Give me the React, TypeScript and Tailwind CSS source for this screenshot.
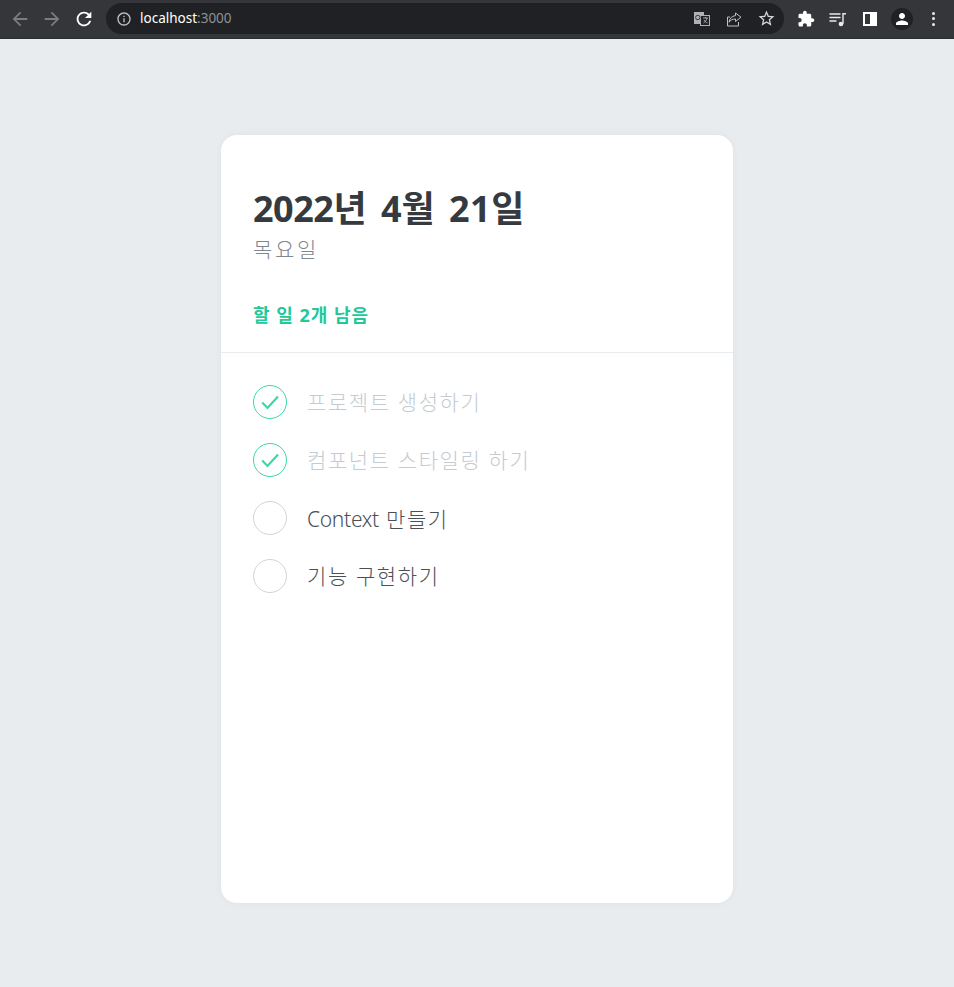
import React from "react";

const FONT = "font-['Noto_Sans','Noto_Sans_CJK_KR',sans-serif]";

interface IconProps {
  d: string;
  className: string;
}

const Icon: React.FC<IconProps> = ({ d, className }) => (
  <svg viewBox="0 0 24 24" fill="currentColor" className={className}>
    <path d={d} />
  </svg>
);

const ARROW_LEFT = "M20 11H7.83l5.59-5.59L12 4l-8 8 8 8 1.41-1.41L7.83 13H20v-2z";
const ARROW_RIGHT = "M4 11h12.17l-5.59-5.59L12 4l8 8-8 8-1.41-1.41L16.17 13H4v-2z";
const REFRESH =
  "M17.65 6.35C16.2 4.9 14.21 4 12 4c-4.42 0-7.99 3.58-7.99 8s3.57 8 7.99 8c3.73 0 6.84-2.55 7.73-6h-2.08c-.82 2.33-3.04 4-5.65 4-3.31 0-6-2.69-6-6s2.69-6 6-6c1.66 0 3.14.69 4.22 1.78L13 11h7V4l-2.35 2.35z";
const INFO =
  "M11 7h2v2h-2zm0 4h2v6h-2zm1-9C6.48 2 2 6.48 2 12s4.48 10 10 10 10-4.48 10-10S17.52 2 12 2zm0 18c-4.41 0-8-3.59-8-8s3.59-8 8-8 8 3.59 8 8-3.59 8-8 8z";
const STAR =
  "M22 9.24l-7.19-.62L12 2 9.19 8.63 2 9.24l5.46 4.73L5.82 21 12 17.27 18.18 21l-1.63-7.03L22 9.24zM12 15.4l-3.76 2.27 1-4.28-3.32-2.88 4.38-.38L12 6.1l1.71 4.04 4.38.38-3.32 2.88 1 4.28L12 15.4z";
const PUZZLE =
  "M20.5 11H19V7c0-1.1-.9-2-2-2h-4V3.5C13 2.12 11.88 1 10.5 1S8 2.12 8 3.5V5H4c-1.1 0-1.99.9-1.99 2v3.8H3.5c1.49 0 2.7 1.21 2.7 2.7s-1.21 2.7-2.7 2.7H2V20c0 1.1.9 2 2 2h3.8v-1.5c0-1.49 1.21-2.7 2.7-2.7 1.49 0 2.7 1.21 2.7 2.7V22H17c1.1 0 2-.9 2-2v-4h1.5c1.38 0 2.5-1.12 2.5-2.5S21.88 11 20.5 11z";
const PERSON =
  "M12 12c2.21 0 4-1.79 4-4s-1.79-4-4-4-4 1.79-4 4 1.79 4 4 4zm0 2c-2.67 0-8 1.34-8 4v2h16v-2c0-2.66-5.33-4-8-4z";

const BrowserBar: React.FC = () => (
  <div className="flex h-[39px] items-start bg-[#35363a] pt-[3px] shadow-[inset_0_-1px_0_#2b2c30]">
    <div className="flex h-[31px] items-center pl-[9px]">
      <Icon d={ARROW_LEFT} className="h-[22px] w-[22px] text-[#7b7c7f]" />
      <Icon d={ARROW_RIGHT} className="ml-[10px] h-[22px] w-[22px] text-[#7b7c7f]" />
      <Icon d={REFRESH} className="ml-[10px] h-[22px] w-[22px] text-white" />
    </div>
    <div className="ml-[11px] flex h-[31px] w-[678px] items-center rounded-full bg-[#202124] pl-[10px] pr-[8px]">
      <Icon d={INFO} className="h-[16px] w-[16px] text-[#bdc1c6]" />
      <span className="ml-[8px] font-['Noto_Sans',sans-serif] text-[13.5px] leading-none text-white">
        localhost<span className="text-[#8f9296]">:3000</span>
      </span>
      <div className="ml-auto flex items-center gap-[14px]">
        <svg viewBox="0 0 18 18" className="h-[18px] w-[18px]">
          <rect x="1" y="2" width="10" height="12" fill="#aeb1b5" />
          <rect x="7.500" y="5.500" width="9" height="10" fill="#202124" stroke="#aeb1b5" strokeWidth="1" />
          <path d="M10 8h5M12.500 7v1M14 8c-.5 2.500-2 4-3.500 5M11 10c.8 1.400 2 2.500 3.500 3" fill="none" stroke="#aeb1b5" strokeWidth="0.900" />
          <circle cx="4.800" cy="7.500" r="2.200" fill="none" stroke="#35363a" strokeWidth="1" />
        </svg>
        <svg viewBox="0 0 18 18" className="h-[18px] w-[18px]" fill="none" stroke="#bdc1c6" strokeWidth="1">
          <path d="M10.500 3 16 7.200l-5.500 4.300V9c-3 0-5 1-6.500 3.200C4.500 8.500 7 6 10.500 5.600z" />
          <path d="M13.500 12v4h-11V7H5" />
        </svg>
        <Icon d={STAR} className="h-[19px] w-[19px] text-[#d5d7da]" />
      </div>
    </div>
    <div className="flex h-[31px] items-center">
      <Icon d={PUZZLE} className="ml-[13px] h-[18px] w-[18px] text-white" />
      <svg viewBox="0 0 18 18" className="ml-[14px] h-[18px] w-[18px]" fill="none" stroke="#e8eaed" strokeWidth="1.400">
        <path d="M0.500 4h11M0.500 7.500h11M0.500 11h7" />
        <path d="M17 3.800h-3v10" />
        <circle cx="12" cy="14" r="2.300" fill="#e8eaed" stroke="none" />
      </svg>
      <div className="ml-[16px] flex h-[14px] w-[14px] justify-end border-2 border-white">
        <div className="h-full w-[5px] bg-white" />
      </div>
      <div className="ml-[14px] flex h-[22px] w-[22px] items-center justify-center rounded-full bg-[#202124]">
        <Icon d={PERSON} className="h-[18px] w-[18px] text-white" />
      </div>
      <div className="ml-[19px] flex flex-col gap-[2.500px]">
        <div className="h-[3px] w-[3px] rounded-full bg-[#e8eaed]" />
        <div className="h-[3px] w-[3px] rounded-full bg-[#e8eaed]" />
        <div className="h-[3px] w-[3px] rounded-full bg-[#e8eaed]" />
      </div>
    </div>
  </div>
);

interface TodoProps {
  text: string;
  latin?: string;
  done: boolean;
}

const TodoItem: React.FC<TodoProps> = ({ text, latin, done }) => (
  <div className="flex h-[58px] items-center">
    <div
      className={
        done
          ? "mr-5 flex h-[34px] w-[34px] items-center justify-center rounded-full border border-[#38d9a9] text-[#38d9a9]"
          : "mr-5 flex h-[34px] w-[34px] items-center justify-center rounded-full border border-[#ced4da]"
      }
    >
      {done && (
        <svg viewBox="0 0 24 24" className="h-[24px] w-[24px]" fill="none" stroke="currentColor" strokeWidth="2.200">
          <path d="M4.200 12.500 9.500 18 20 6.500" />
        </svg>
      )}
    </div>
    <div
      className={
        done
          ? "pt-[2px] text-[21px] font-light tracking-[1.6px] text-[#c4cbd2]"
          : latin
            ? "pt-[4px] text-[21px] font-light tracking-[1.6px] text-[#495057]"
            : "pt-[2px] text-[21px] font-light tracking-[1.6px] text-[#495057]"
      }
    >
      {latin && <span className="tracking-[-0.3px]">{latin}</span>}
      {text}
    </div>
  </div>
);

const todos: TodoProps[] = [
  { text: "프로젝트 생성하기", done: true },
  { text: "컴포넌트 스타일링 하기", done: true },
  { text: " 만들기", latin: "Context", done: false },
  { text: "기능 구현하기", done: false },
];

export default function App() {
  return (
    <div className={`${FONT} min-h-[987px] bg-[#e9ecef]`}>
      <BrowserBar />
      <div className="mx-auto mt-24 flex h-[768px] w-[512px] flex-col rounded-2xl bg-white shadow-[0_0_8px_rgba(0,0,0,0.04)]">
        <div className="border-b border-[#e9ecef] px-8 pb-6 pt-12">
          <h1 className="text-[36px] font-bold leading-[52px] text-[#343a40]">
            <span className="tracking-[-0.5px]">2022</span>
            <span className="tracking-[3px]">년</span>
            <span className="tracking-[2px]"> </span>
            <span>4</span>
            <span className="tracking-[3px]">월</span>
            <span className="tracking-[2px]"> </span>
            <span className="tracking-[0.5px]">21</span>
            <span>일</span>
          </h1>
          <div className="text-[21px] font-light leading-[28px] tracking-[2.7px] text-[#7f8790]">목요일</div>
          <div className="mt-10 text-[18px] font-bold leading-[25px] tracking-[1px] text-[#20c997]">할 일 2개 남음</div>
        </div>
        <div className="flex-1 px-8 pb-12 pt-5">
          {todos.map((t) => (
            <TodoItem key={t.text} text={t.text} latin={t.latin} done={t.done} />
          ))}
        </div>
      </div>
    </div>
  );
}
